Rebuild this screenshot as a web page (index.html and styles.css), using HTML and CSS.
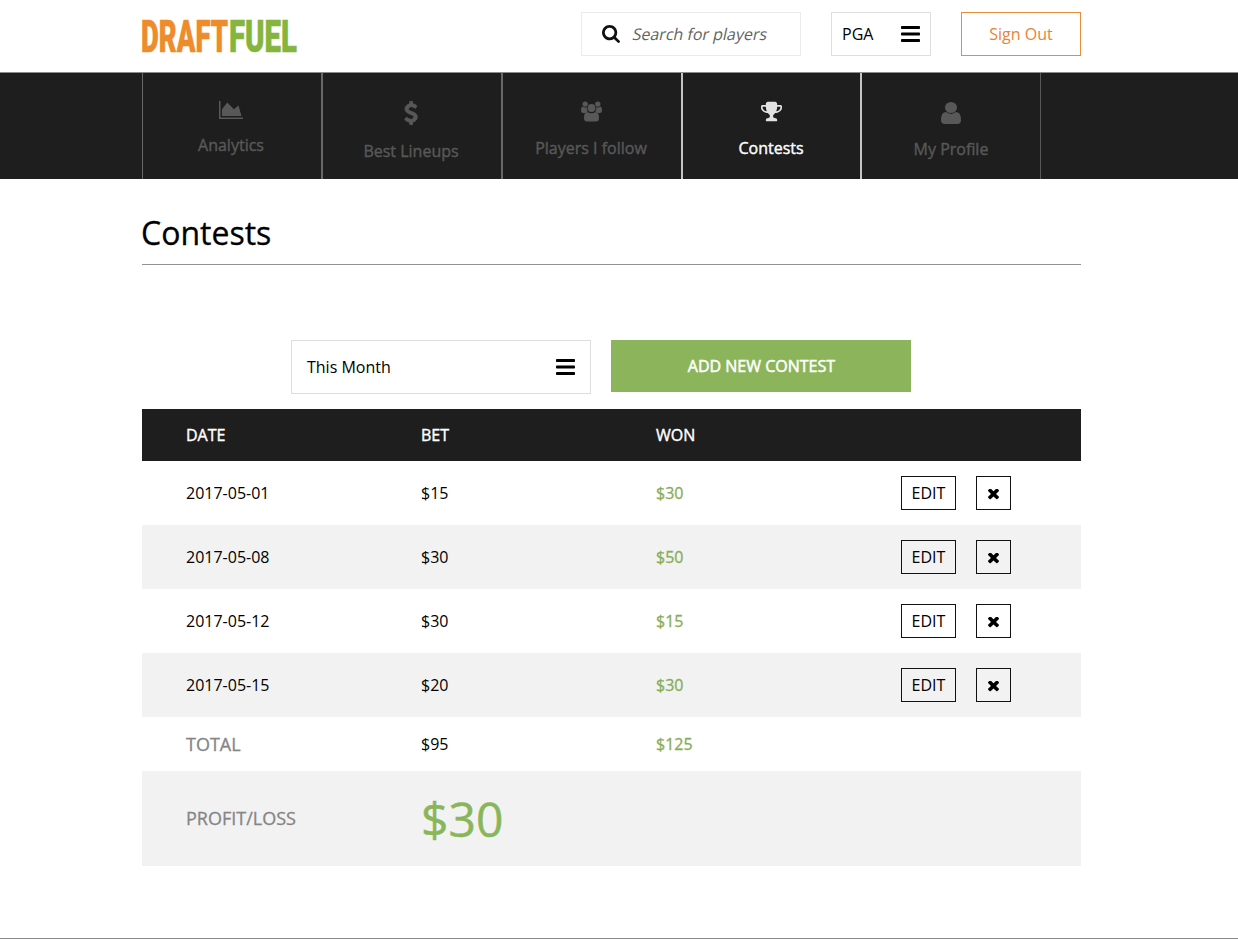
FILE: index.html
```html
<!DOCTYPE html>
<html lang="en">
<head>
<meta charset="utf-8">
<title>DraftFuel - Contests</title>
<link rel="stylesheet" href="styles.css">
</head>
<body>
<svg class="sprite" width="0" height="0" aria-hidden="true">
  <symbol id="bars" viewBox="0 0 19 16"><rect width="19" height="3" rx=".8"/><rect y="6.5" width="19" height="3" rx=".8"/><rect y="13" width="19" height="3" rx=".8"/></symbol>
  <symbol id="times" viewBox="300 432 1190 1190"><path d="M1490 1322q0 40-28 68l-136 136q-28 28-68 28t-68-28l-294-294-294 294q-28 28-68 28t-68-28l-136-136q-28-28-28-68t28-68l294-294-294-294q-28-28-28-68t28-68l136-136q28-28 68-28t68 28l294 294 294-294q28-28 68-28t68 28l136 136q28 28 28 68t-28 68l-294 294 294 294q28 28 28 68z"/></symbol>
</svg>
<header class="header">
  <div class="container header-row">
    <a class="logo" aria-label="DraftFuel">
      <svg width="88" height="36" viewBox="0 0 88 36">
        <text class="logo-draft" x="0" y="33.500" textLength="87" lengthAdjust="spacingAndGlyphs">DRAFT</text>
      </svg>
      <svg width="68" height="36" viewBox="0 0 68 36">
        <text class="logo-fuel" x="0" y="33.500" textLength="68" lengthAdjust="spacingAndGlyphs">FUEL</text>
      </svg>
    </a>
    <div class="search">
      <svg width="18" height="18" viewBox="64 128 1664 1664"><path d="M1216 832q0-185-131.5-316.5t-316.5-131.5-316.5 131.5-131.5 316.5 131.5 316.5 316.5 131.5 316.5-131.5 131.5-316.5zm512 832q0 52-38 90t-90 38q-54 0-90-38l-343-342q-179 124-399 124-143 0-273.5-55.5t-225-150-150-225-55.5-273.5 55.5-273.5 150-225 225-150 273.5-55.5 273.5 55.5 225 150 150 225 55.5 273.5q0 220-124 399l343 343q37 37 37 90z"/></svg>
      <span>Search for players</span>
    </div>
    <div class="select select-league"><span>PGA</span><svg width="19" height="16"><use href="#bars"/></svg></div>
    <a class="sign-out">Sign Out</a>
  </div>
</header>
<nav class="nav">
  <ul class="container nav-list">
    <li class="nav-item nav-analytics">
      <svg width="24" height="18" viewBox="0 128 2048 1536"><path d="M2048 1536v128h-2048v-1536h128v1408h1920zm-384-1024l256 896h-1664v-576l448-576 576 576z"/></svg>
      <span>Analytics</span>
    </li>
    <li class="nav-item nav-lineups">
      <svg width="14" height="24" viewBox="425 0 942 1792"><path stroke="currentColor" stroke-width="70" d="M1362 1185q0 153-99.500 263.500t-258.500 136.500v175q0 14-9 23t-23 9h-135q-13 0-22.500-9.500t-9.500-22.500v-175q-66-9-127.500-31t-101.500-44.500-74-48-46.500-37.500-17.500-18q-17-21-2-41l103-135q7-10 23-12 15-2 24 9l2 2q113 99 243 125 37 8 74 8 81 0 142.500-43t61.500-122q0-28-15-53t-33.500-42-58.500-37.500-66-32-80-32.500q-39-16-61.500-25t-61.500-26.500-62.500-31-56.500-35.500-53.500-42.500-43.500-49-35.500-58-21-66.500-8.500-78q0-138 98-242t255-134v-180q0-13 9.500-22.500t22.500-9.500h135q14 0 23 9t9 23v176q57 6 110.500 23t87 33.500 63.500 37.500 39 29 15 14q17 18 5 38l-81 146q-8 15-23 16-14 3-27-7-3-3-14.500-12t-39-26.500-58.500-32-74.500-26-85.500-11.500q-95 0-155 43t-60 111q0 26 8.500 48t29.500 41.500 39.500 33 56 31 60.500 27 70 27.500q53 20 81 31.500t76 35 75.500 42.500 62 50 53 63.500 31.500 76.500 13 94z"/></svg>
      <span>Best Lineups</span>
    </li>
    <li class="nav-item nav-players">
      <svg width="21" height="21" viewBox="0 0 21 21"><circle cx="4.200" cy="3.100" r="2.700"/><circle cx="16.800" cy="3.100" r="2.700"/><circle cx="10.500" cy="7" r="3.900"/><path d="M1.600 5.600q2.300 1.500 4.300.7-.4 2.600 1 4.300-1.700.2-2.800 1.400H2.200Q0 12 0 9.800q0-3.600 1.600-4.200zM19.400 5.600q-2.300 1.500-4.300.7.400 2.600-1 4.300 1.700.2 2.800 1.400h1.900q2.200 0 2.200-2.200 0-3.600-1.600-4.200zM6.300 11q4.200 2.600 8.400 0 3.300 0 3.300 6.200 0 3.300-3 3.300H6q-3 0-3-3.300Q3 11 6.300 11z"/></svg>
      <span>Players I follow</span>
    </li>
    <li class="nav-item nav-contests is-active">
      <svg width="21" height="21" viewBox="64 128 1664 1536"><path d="M522 883q-74-162-74-371h-256v96q0 78 94.500 162t235.500 113zm1078-275v-96h-256q0 209-74 371 141-29 235.500-113t94.500-162zm128-128v128q0 71-41.500 143t-112 130-173 97.500-215.500 44.500q-42 54-95 95-38 34-52.500 72.500t-14.500 89.500q0 54 30.500 91t97.500 37q75 0 133.500 45.500t58.500 114.500v64q0 14-9 23t-23 9h-832q-14 0-23-9t-9-23v-64q0-69 58.500-114.500t133.500-45.500q67 0 97.500-37t30.500-91q0-51-14.500-89.500t-52.500-72.500q-53-41-95-95-113-5-215.500-44.500t-173-97.500-112-130-41.500-143v-128q0-40 28-68t68-28h288v-96q0-66 47-113t113-47h576q66 0 113 47t47 113v96h288q40 0 68 28t28 68z"/></svg>
      <span>Contests</span>
    </li>
    <li class="nav-item nav-profile">
      <svg width="20" height="22" viewBox="256 128 1280 1536" preserveAspectRatio="none"><path d="M1536 1399q0 109-62.500 187t-150.500 78h-854q-88 0-150.500-78t-62.500-187q0-85 8.500-160.500t31.500-152 58.500-131 94-89 134.500-34.500q131 128 313 128t313-128q76 0 134.500 34.500t94 89 58.500 131 31.500 152 8.500 160.500zm-256-887q0 159-112.500 271.500t-271.500 112.500-271.500-112.500-112.500-271.500 112.500-271.500 271.500-112.500 271.500 112.500 112.500 271.500z"/></svg>
      <span>My Profile</span>
    </li>
  </ul>
</nav>
<main class="container main">
  <h1 class="title">Contests</h1>
  <div class="toolbar">
    <div class="select select-period"><span>This Month</span><svg width="19" height="16"><use href="#bars"/></svg></div>
    <a class="add">ADD NEW CONTEST</a>
  </div>
  <div class="table">
    <div class="row head"><span>DATE</span><span>BET</span><span>WON</span></div>
    <div class="row"><span>2017-05-01</span><span>$15</span><span class="won">$30</span><div class="actions"><a class="btn edit">EDIT</a><a class="btn remove"><svg width="11" height="11"><use href="#times"/></svg></a></div></div>
    <div class="row shaded"><span>2017-05-08</span><span>$30</span><span class="won">$50</span><div class="actions"><a class="btn edit">EDIT</a><a class="btn remove"><svg width="11" height="11"><use href="#times"/></svg></a></div></div>
    <div class="row"><span>2017-05-12</span><span>$30</span><span class="won">$15</span><div class="actions"><a class="btn edit">EDIT</a><a class="btn remove"><svg width="11" height="11"><use href="#times"/></svg></a></div></div>
    <div class="row shaded"><span>2017-05-15</span><span>$20</span><span class="won">$30</span><div class="actions"><a class="btn edit">EDIT</a><a class="btn remove"><svg width="11" height="11"><use href="#times"/></svg></a></div></div>
    <div class="row total"><span class="caption">TOTAL</span><span>$95</span><span class="won">$125</span></div>
    <div class="row shaded profit"><span class="caption">PROFIT/LOSS</span><span class="amount">$30</span></div>
  </div>
</main>
<footer class="footer"></footer>
</body>
</html>
```
FILE: styles.css
```css
* { box-sizing: border-box; }
body {
  margin: 0;
  height: 941px;
  overflow: hidden;
  background: #fff;
  color: #000;
  font: 16px/22px "Open Sans", "Noto Sans", sans-serif;
}
svg { display: block; flex: none; fill: currentColor; }
.sprite { position: absolute; }
.container { width: 939px; margin: 0 0 0 142px; }

.header { height: 72px; padding-top: 12px; }
.header-row { display: flex; height: 44px; }
.logo { display: flex; margin: 6px auto 0 -1px; }
.logo svg { overflow: visible; }
.logo text { font: 900 44px Roboto, sans-serif; stroke-width: .6; }
.logo-draft { fill: #ee8b2a; stroke: #ee8b2a; }
.logo-fuel { fill: #86b53d; stroke: #86b53d; }
.search {
  display: flex;
  align-items: center;
  gap: 13px;
  width: 220px;
  margin-right: 30px;
  padding-left: 20px;
  border: 1px solid #ebebeb;
  color: #111;
}
.search span { color: #636363; transform: skewX(-12deg); }
.select {
  display: flex;
  align-items: center;
  justify-content: space-between;
  border: 1px solid #dedede;
}
.select-league { width: 100px; margin-right: 30px; padding: 0 10px; }
.sign-out {
  width: 120px;
  border: 1px solid #e98b3c;
  color: #ea8338;
  line-height: 42px;
  text-align: center;
}

.nav { height: 107px; border-top: 1px solid #8b8b8b; background: #1e1e1e; }
.nav-list {
  display: grid;
  grid-template-columns: 179px 180px 180px 179px 181px;
  height: 106px;
  padding: 0;
  list-style: none;
}
.nav-item {
  display: flex;
  flex-direction: column;
  align-items: center;
  padding: 28px 2px 0 0;
  border-left: 2px solid #686868;
  color: #585858;
  -webkit-text-stroke: .4px currentColor;
}
.nav-analytics { border-left-width: 1px; }
.nav-item span { margin-top: 15px; }
.nav-item.nav-profile { padding-right: 0; border-right: 1px solid #585858; }
.nav-profile svg { margin-top: 1px; }
.nav-profile span { margin-top: 14px; }
.is-active, .nav-profile { border-left-color: #c4c4c4; }
.is-active { padding-right: 1px; color: #fff; }
.is-active svg { color: #e2e2e2; }

.title {
  height: 86px;
  margin: 0;
  padding-top: 32px;
  border-bottom: 1px solid #929292;
  font-size: 32px;
  font-weight: 400;
  line-height: 44px;
  text-indent: -1px;
  -webkit-text-stroke: .3px currentColor;
}
.toolbar { display: flex; gap: 20px; padding: 75px 0 15px 149.4px; }
.select-period { width: 300px; height: 54px; padding: 0 15px 0 14.6px; }
.add {
  width: 300px;
  height: 52px;
  background: #8cb55b;
  color: #fff;
  line-height: 53px;
  text-align: center;
  -webkit-text-stroke: .5px currentColor;
}

.row {
  display: grid;
  grid-template-columns: 235px 235px 245px 1fr;
  align-items: center;
  height: 64px;
  padding-left: 44px;
}
.head { height: 52px; background: #1e1e1e; color: #fff; -webkit-text-stroke: .4px currentColor; }
.shaded { background: #f2f2f2; }
.won { color: #86ae56; -webkit-text-stroke: .3px currentColor; }
.actions { display: flex; gap: 20px; }
.btn {
  display: flex;
  align-items: center;
  justify-content: center;
  height: 34px;
  border: 1px solid #111;
}
.edit { width: 55px; }
.remove { width: 35px; padding-top: 2px; }
.total { height: 54px; }
.caption { color: #858585; font-size: 18px; -webkit-text-stroke: .3px currentColor; }
.profit { height: 95px; }
.profit .caption { padding-bottom: 2px; }
.amount { color: #8ab65a; font-size: 48px; line-height: 64px; -webkit-text-stroke: .5px currentColor; }
.footer { height: 1px; margin-top: 72px; background: #888; }
```
